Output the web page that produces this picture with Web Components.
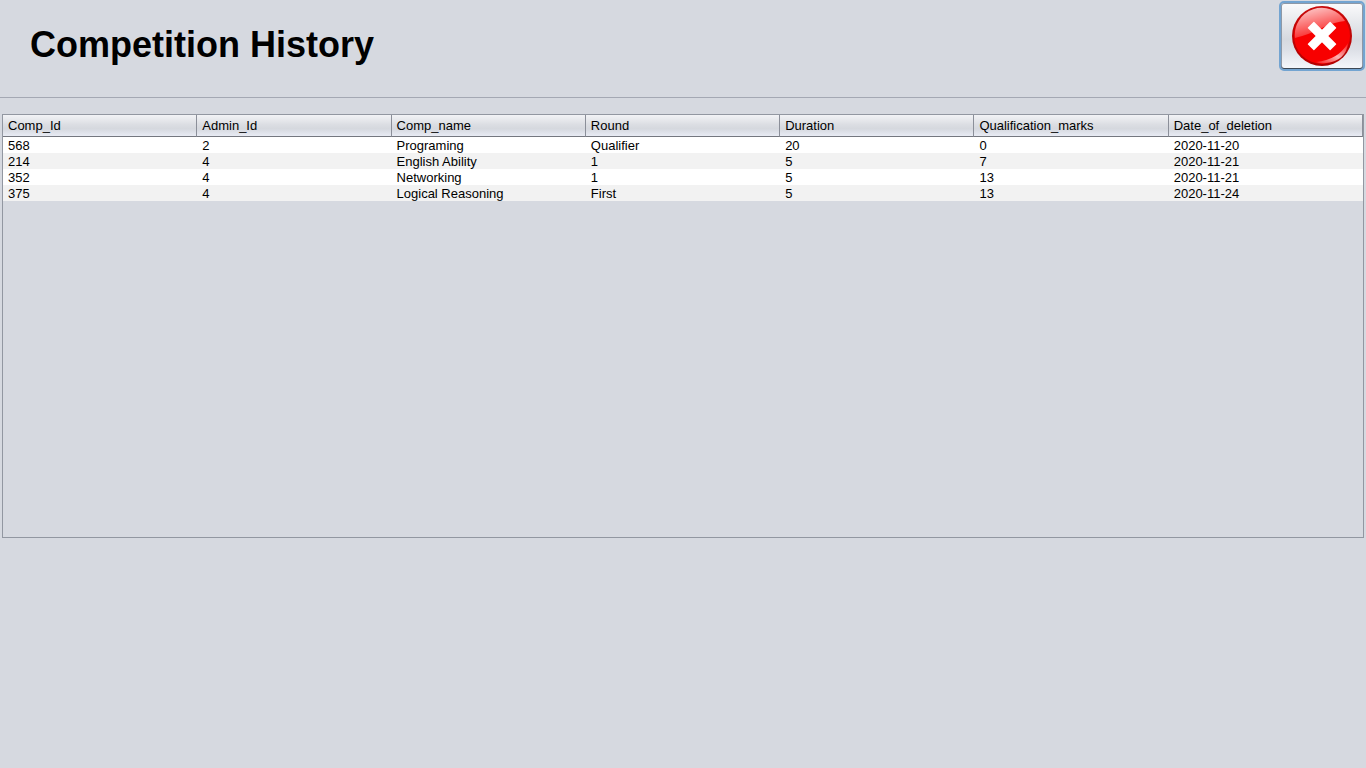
<!DOCTYPE html>
<html lang="en">
<head>
<meta charset="utf-8">
<title>Competition History</title>
<style>
  html, body { margin: 0; min-height: 100%; }
  body { background: #d6d9e0; color: #000; font: 13px/16px "Liberation Sans", Arial, sans-serif; }
</style>
</head>
<body>
<history-page></history-page>

<template id="page-template">
  <style>
    :host { display: block; }
    main { padding: 16px 2px; }
  </style>
  <page-header>Competition History<close-button slot="action"></close-button></page-header>
  <main><history-table></history-table></main>
</template>

<template id="header-template">
  <style>
    :host { display: block; }
    header {
      display: flex; justify-content: space-between; align-items: flex-start;
      min-height: 98px; padding: 0 1px 0 30px; box-sizing: border-box;
      border-bottom: 1px solid #a4a8b3;
    }
    h1 { margin: 0; padding-top: 25px; font-size: 36px; line-height: 40px; font-weight: bold; }
  </style>
  <header><h1><slot></slot></h1><slot name="action"></slot></header>
</template>

<template id="close-template">
  <style>
    :host { display: block; padding-top: 1px; }
    button {
      display: flex; align-items: center; justify-content: center;
      width: 86px; height: 70px; padding: 0; box-sizing: border-box;
      border: 2px solid #73a4d1; border-radius: 5px; cursor: pointer;
      background: linear-gradient(#fbfbfc, #e6e8ec 30%, #d6d9df 55%, #dcdfe6 70%, #f6f8fc) padding-box;
      box-shadow: inset 0 -1px 0 #3d4855, inset 0 0 0 1px #8e98a6;
    }
    svg { display: block; width: 60px; height: 60px; }
  </style>
  <button type="button" aria-label="Close">
    <svg viewBox="0 0 60 60" aria-hidden="true">
      <defs>
        <linearGradient id="rim" x1="0" y1="0" x2="0" y2="1">
          <stop offset="0" stop-color="#c80a0a"/><stop offset="1" stop-color="#b40000"/>
        </linearGradient>
        <linearGradient id="gloss" x1="0.2" y1="0" x2="0.6" y2="1">
          <stop offset="0" stop-color="#fff" stop-opacity=".8"/>
          <stop offset="1" stop-color="#fff" stop-opacity=".08"/>
        </linearGradient>
        <linearGradient id="glow" x1="0" y1="1" x2="1" y2="0">
          <stop offset="0" stop-color="#fff" stop-opacity=".1"/>
          <stop offset=".5" stop-color="#fff" stop-opacity=".7"/>
          <stop offset="1" stop-color="#fff" stop-opacity=".1"/>
        </linearGradient>
      </defs>
      <circle cx="30" cy="30" r="30" fill="url(#rim)"/>
      <circle cx="30" cy="30" r="28" fill="#f80000"/>
      <path d="M3 32A27 27 0 0 1 53 15Q43 16 32 21Q16 29 3 32Z" fill="url(#gloss)"/>
      <path d="M24 56Q46 54 56 37Q54 55 34 57Q28 58 24 56Z" fill="url(#glow)"/>
      <g transform="translate(30 30) rotate(45)" fill="#fff">
        <rect x="-16" y="-4.5" width="32" height="9" rx=".6"/>
        <rect x="-4.5" y="-16" width="9" height="32" rx=".6"/>
      </g>
    </svg>
  </button>
</template>

<template id="table-template">
  <style>
    :host { display: block; min-height: 422px; border: 1px solid #9297a1; }
    table { width: 100%; table-layout: fixed; border-collapse: separate; border-spacing: 0; }
    th, td { padding: 0 5px; text-align: left; font-weight: normal; white-space: nowrap; overflow: hidden; }
    th {
      height: 21px; border-right: 1px solid #8b8f99; border-bottom: 1px solid #74777f;
      background: linear-gradient(#f2f3f6, #dcdee3 45%, #d5d8de 65%, #e8ebf4);
    }
    td { padding-top: 2px; line-height: 14px; background: #fff; }
    tr:nth-child(even) td { background: #f2f2f2; }
  </style>
  <table>
    <thead><tr></tr></thead>
    <tbody></tbody>
  </table>
</template>

<script>
  class TemplateElement extends HTMLElement {
    constructor() {
      super();
      const template = document.getElementById(this.constructor.template);
      this.attachShadow({ mode: "open" }).append(template.content.cloneNode(true));
    }
  }

  class CloseButton extends TemplateElement { static template = "close-template"; }
  class PageHeader extends TemplateElement { static template = "header-template"; }

  class HistoryTable extends TemplateElement {
    static template = "table-template";
    static columns = ["Comp_Id", "Admin_Id", "Comp_name", "Round", "Duration", "Qualification_marks", "Date_of_deletion"];
    static rows = [
      ["568", "2", "Programing", "Qualifier", "20", "0", "2020-11-20"],
      ["214", "4", "English Ability", "1", "5", "7", "2020-11-21"],
      ["352", "4", "Networking", "1", "5", "13", "2020-11-21"],
      ["375", "4", "Logical Reasoning", "First", "5", "13", "2020-11-24"]
    ];
    connectedCallback() {
      const head = this.shadowRoot.querySelector("thead tr");
      const body = this.shadowRoot.querySelector("tbody");
      head.replaceChildren(...HistoryTable.columns.map(name => {
        const th = document.createElement("th");
        th.scope = "col";
        th.textContent = name;
        return th;
      }));
      body.replaceChildren(...HistoryTable.rows.map(row => {
        const tr = document.createElement("tr");
        tr.append(...row.map(value => {
          const td = document.createElement("td");
          td.textContent = value;
          return td;
        }));
        return tr;
      }));
    }
  }

  class HistoryPage extends TemplateElement { static template = "page-template"; }

  customElements.define("close-button", CloseButton);
  customElements.define("page-header", PageHeader);
  customElements.define("history-table", HistoryTable);
  customElements.define("history-page", HistoryPage);
</script>
</body>
</html>
